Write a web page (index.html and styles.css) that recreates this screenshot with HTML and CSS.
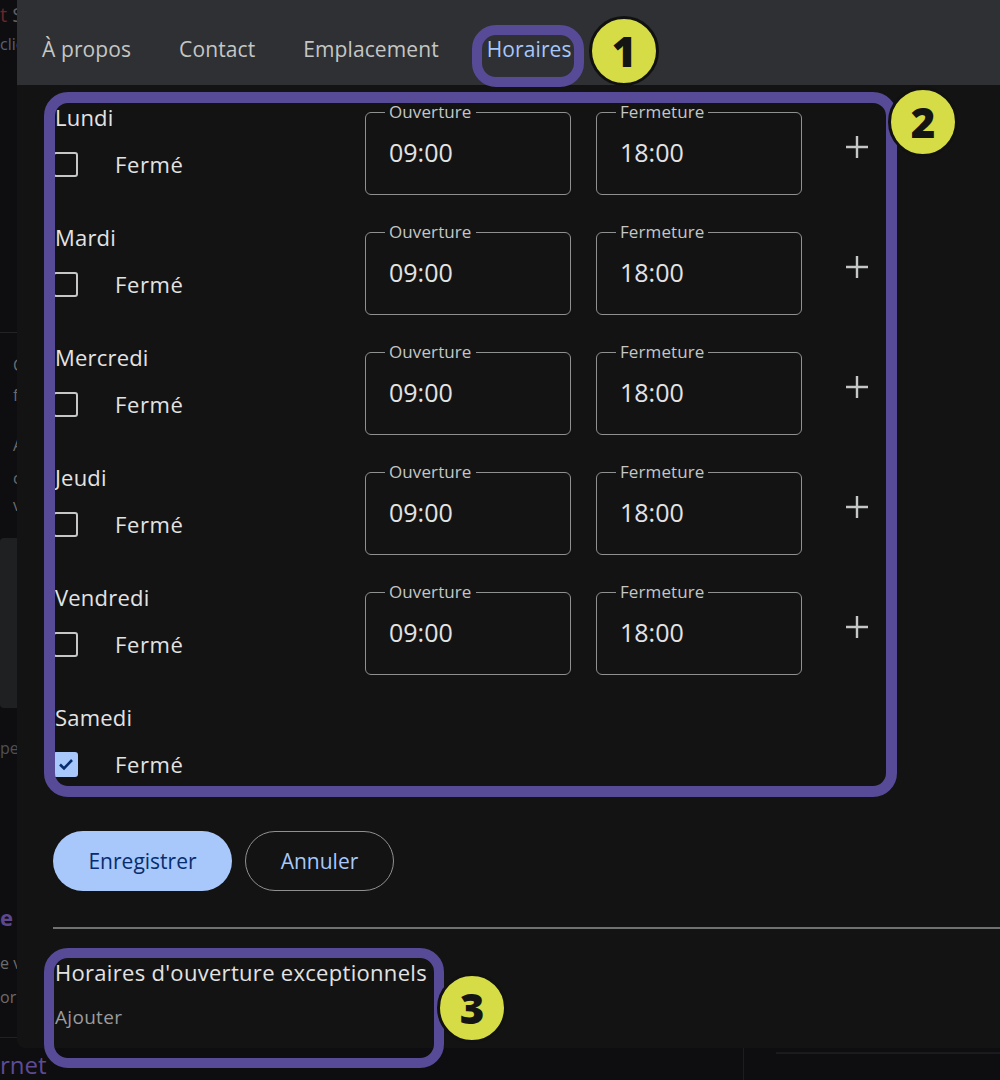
FILE: index.html
```html
<!DOCTYPE html>
<html lang="fr">
<head>
<meta charset="UTF-8">
<meta name="viewport" content="width=device-width, initial-scale=1.0">
<title>Horaires</title>
<link rel="stylesheet" href="styles.css">
</head>
<body>

<!-- page behind the dialog -->
<div class="page">
  <aside class="side">
    <p class="bg-head"><span class="bg-red">t</span> S</p>
    <p class="bg-link">clie</p>
    <section class="bg-card">
      <p class="l1">C</p>
      <p class="l2">f</p>
      <p class="l3">A</p>
      <p class="l4">c</p>
      <p class="l5">v</p>
    </section>
    <div class="bg-panel"></div>
    <p class="bg-note">pe</p>
    <section class="bg-card2">
      <p class="bg-title"><b>e</b> s</p>
      <p class="l6">e v</p>
      <p class="l7">ori</p>
    </section>
    <p class="bg-purple">rnet</p>
  </aside>
  <div class="main">
    <div class="main-rule"></div>
  </div>
</div>

<div class="dialog">
  <nav class="tabs">
    <span class="tab">À propos</span>
    <span class="tab">Contact</span>
    <span class="tab">Emplacement</span>
    <span class="tab active">Horaires</span>
  </nav>

  <div class="content">
    <div class="day">
      <div class="day-info">
        <div class="day-name">Lundi</div>
        <label class="closed"><span class="check"></span>Fermé</label>
      </div>
      <fieldset class="field"><legend>Ouverture</legend><span class="value">09:00</span></fieldset>
      <fieldset class="field"><legend>Fermeture</legend><span class="value">18:00</span></fieldset>
      <svg class="plus" width="24" height="24" viewBox="0 0 24 24"><path d="M12 1v22M1 12h22"/></svg>
    </div>
    <div class="day">
      <div class="day-info">
        <div class="day-name">Mardi</div>
        <label class="closed"><span class="check"></span>Fermé</label>
      </div>
      <fieldset class="field"><legend>Ouverture</legend><span class="value">09:00</span></fieldset>
      <fieldset class="field"><legend>Fermeture</legend><span class="value">18:00</span></fieldset>
      <svg class="plus" width="24" height="24" viewBox="0 0 24 24"><path d="M12 1v22M1 12h22"/></svg>
    </div>
    <div class="day">
      <div class="day-info">
        <div class="day-name">Mercredi</div>
        <label class="closed"><span class="check"></span>Fermé</label>
      </div>
      <fieldset class="field"><legend>Ouverture</legend><span class="value">09:00</span></fieldset>
      <fieldset class="field"><legend>Fermeture</legend><span class="value">18:00</span></fieldset>
      <svg class="plus" width="24" height="24" viewBox="0 0 24 24"><path d="M12 1v22M1 12h22"/></svg>
    </div>
    <div class="day">
      <div class="day-info">
        <div class="day-name">Jeudi</div>
        <label class="closed"><span class="check"></span>Fermé</label>
      </div>
      <fieldset class="field"><legend>Ouverture</legend><span class="value">09:00</span></fieldset>
      <fieldset class="field"><legend>Fermeture</legend><span class="value">18:00</span></fieldset>
      <svg class="plus" width="24" height="24" viewBox="0 0 24 24"><path d="M12 1v22M1 12h22"/></svg>
    </div>
    <div class="day">
      <div class="day-info">
        <div class="day-name">Vendredi</div>
        <label class="closed"><span class="check"></span>Fermé</label>
      </div>
      <fieldset class="field"><legend>Ouverture</legend><span class="value">09:00</span></fieldset>
      <fieldset class="field"><legend>Fermeture</legend><span class="value">18:00</span></fieldset>
      <svg class="plus" width="24" height="24" viewBox="0 0 24 24"><path d="M12 1v22M1 12h22"/></svg>
    </div>
    <div class="day">
      <div class="day-info">
        <div class="day-name">Samedi</div>
        <label class="closed"><span class="check checked"><svg width="18" height="18" viewBox="0 0 18 18"><path d="M3 9.5l4 4 8-8.5"/></svg></span>Fermé</label>
      </div>
    </div>

    <div class="actions">
      <button class="btn primary">Enregistrer</button>
      <button class="btn outline">Annuler</button>
    </div>

    <hr class="divider">

    <h3 class="extra-title">Horaires d'ouverture exceptionnels</h3>
    <div class="extra-add">Ajouter</div>
  </div>
</div>

<!-- callouts -->
<div class="mark mark-tabs"></div>
<div class="mark mark-days"></div>
<div class="mark mark-extra"></div>
<div class="badge badge-1">1</div>
<div class="badge badge-2">2</div>
<div class="badge badge-3">3</div>

</body>
</html>
```

FILE: styles.css
```css
*{
	box-sizing: border-box;
}
body{
	margin: 0;
	height: 1080px;
	overflow: hidden;
	background-color: #0e0e10;
	font-family: "Open Sans", Roboto, sans-serif;
	color: #e3e3e3;
}
p{
	margin: 0;
}

/* background page */
.page{
	display: flex;
	height: 1080px;
}
.side{
	width: 744px;
	border-right: 1px solid #1d1d20;
	color: #6b6c6e;
	font-size: 16px;
	line-height: 20px;
}
.bg-head{
	margin-top: 3px;
	font-size: 20px;
	line-height: 24px;
	color: #5e5f62;
}
.bg-red{
	color: #6a2628;
}
.bg-link{
	margin-top: 7px;
	color: #56607a;
}
.bg-card{
	margin-top: 278px;
	border-top: 1px solid #232326;
	padding-left: 13px;
}
.bg-card .l1{ margin-top: 22px; }
.bg-card .l2{ margin-top: 10px; }
.bg-card .l3{ margin-top: 30px; }
.bg-card .l4{ margin-top: 13px; }
.bg-card .l5{ margin-top: 7px; }
.bg-panel{
	margin-top: 23px;
	height: 170px;
	background-color: #1f2022;
	border-radius: 4px;
}
.bg-note{
	margin-top: 30px;
	color: #4f5053;
}
.bg-card2{
	margin-top: 145px;
	border-bottom: 1px solid #202023;
	padding-bottom: 30px;
}
.bg-title{
	font-size: 22px;
	line-height: 28px;
	color: #515255;
}
.bg-title b{
	color: #5d4890;
}
.bg-card2 .l6{ margin-top: 22px; }
.bg-card2 .l7{ margin-top: 14px; }
.bg-purple{
	margin-top: 12px;
	font-size: 24px;
	line-height: 30px;
	color: #5f4b95;
}
.main{
	flex: 1;
}
.main-rule{
	margin: 1052px 0 0 32px;
	height: 2px;
	background-color: #1b1b1e;
}

/* dialog */
.dialog{
	position: absolute;
	left: 17px;
	top: 0;
	right: 0;
	height: 1048px;
	background-color: #131314;
	border-bottom-left-radius: 8px;
	overflow: hidden;
}
.tabs{
	display: flex;
	gap: 48px;
	height: 85px;
	padding: 35px 0 0 25px;
	background-color: #2f3033;
}
.tab{
	font-size: 21px;
	line-height: 28px;
	letter-spacing: 0.1px;
	color: #c4c7c5;
}
.tab.active{
	color: #a8c7fa;
}
.content{
	padding: 19px 0 0 36px;
}
.day{
	display: grid;
	grid-template-columns: 287px 206px 206px 24px;
	column-gap: 25px;
	align-items: start;
	height: 120px;
}
.day-name{
	padding-left: 2px;
	font-size: 22px;
	line-height: 26px;
	letter-spacing: 0.2px;
}
.closed{
	display: flex;
	align-items: center;
	gap: 37px;
	margin-top: 21px;
	font-size: 22px;
	line-height: 26px;
	letter-spacing: 0.6px;
}
.check{
	display: flex;
	align-items: center;
	justify-content: center;
	width: 25px;
	height: 25px;
	border: 2px solid #c4c7c5;
	border-radius: 3px;
}
.check.checked{
	border-color: #a8c7fa;
	background-color: #a8c7fa;
}
.check svg path{
	fill: none;
	stroke: #062e6f;
	stroke-width: 2.6;
}
.field{
	margin: -1px 0 0;
	padding: 16px 23px 0;
	height: 92px;
	min-width: 0;
	border: 1px solid #8e918f;
	border-radius: 6px;
}
.field legend{
	margin-left: -4px;
	padding: 0 4px;
	font-size: 17px;
	line-height: 18px;
	letter-spacing: 0.1px;
	color: #c4c7c5;
}
.value{
	display: block;
	font-size: 25px;
	line-height: 30px;
	color: #e3e3e3;
}
.plus{
	margin: 31px 0 0 18px;
}
.plus path{
	stroke: #c4c7c5;
	stroke-width: 2.4;
}
.actions{
	display: flex;
	gap: 13px;
	margin-top: 7px;
}
.btn{
	height: 60px;
	border-radius: 30px;
	font-family: "Open Sans", Roboto, sans-serif;
	font-size: 21px;
	font-weight: 500;
}
.primary{
	width: 179px;
	border: 0;
	background-color: #a8c7fa;
	color: #062e6f;
}
.outline{
	width: 149px;
	border: 1px solid #8e918f;
	background-color: transparent;
	color: #a8c7fa;
}
.divider{
	margin: 36px 0 0;
	border: 0;
	border-top: 2px solid #6f7271;
}
.extra-title{
	margin: 29px 0 0 2px;
	font-size: 22px;
	font-weight: 400;
	line-height: 28px;
	letter-spacing: 0.3px;
}
.extra-add{
	margin: 19px 0 0 2px;
	font-size: 19px;
	line-height: 24px;
	letter-spacing: 0.3px;
	color: #9a9c9e;
}

/* callouts */
.mark{
	position: absolute;
	border: 10px solid #574b97;
	border-radius: 24px;
}
.mark-tabs{
	left: 472px;
	top: 25px;
	width: 112px;
	height: 62px;
}
.mark-days{
	left: 44px;
	top: 92px;
	width: 853px;
	height: 705px;
	border-width: 11px;
}
.mark-extra{
	left: 44px;
	top: 948px;
	width: 400px;
	height: 120px;
}
.badge{
	position: absolute;
	display: flex;
	align-items: center;
	justify-content: center;
	width: 70px;
	height: 70px;
	border: 3px solid #111;
	border-radius: 50%;
	background-color: #d5dc45;
	color: #141414;
	font-size: 42px;
	font-weight: 800;
	line-height: 1;
}
.badge-1{
	left: 589px;
	top: 16px;
}
.badge-2{
	left: 888px;
	top: 87px;
}
.badge-3{
	left: 437px;
	top: 973px;
}
```
